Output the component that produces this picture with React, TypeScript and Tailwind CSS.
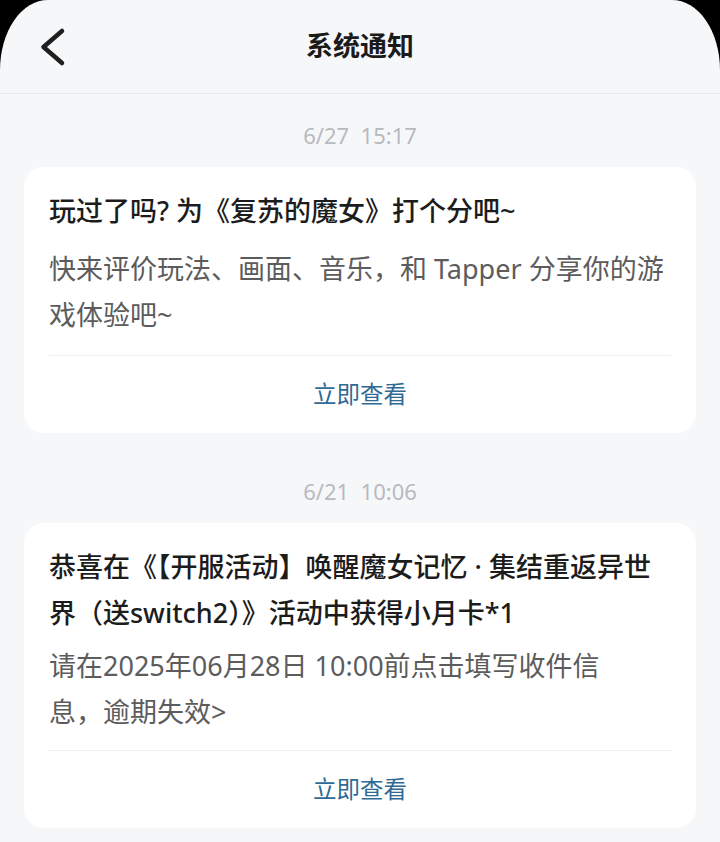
import React from 'react';

interface Notice {
  time: string;
  title: string;
  body: React.ReactNode;
  action: string;
  bodyGap: string;
  lineGap: string;
}

const notices: Notice[] = [
  {
    time: '6/27  15:17',
    title: '玩过了吗? 为《复苏的魔女》打个分吧~',
    body: '快来评价玩法、画面、音乐，和 Tapper 分享你的游戏体验吧~',
    action: '立即查看',
    bodyGap: 'mt-[12px]',
    lineGap: 'mt-[17px]',
  },
  {
    time: '6/21  10:06',
    title: '恭喜在《【开服活动】唤醒魔女记忆 · 集结重返异世界（送switch2）》活动中获得小月卡*1',
    body: (
      <>
        请在2025年06月28日 10:00前点击填写收件信
        <br />
        息，逾期失效&gt;
      </>
    ),
    action: '立即查看',
    bodyGap: 'mt-[7px]',
    lineGap: 'mt-[15px]',
  },
];

function BackIcon() {
  return (
    <svg width="32" height="40" viewBox="0 0 32 40" fill="none">
      <path d="M26 4 L7.5 20 L26 36" stroke="#1f1f1f" strokeWidth="4.5" strokeLinecap="round" strokeLinejoin="round" />
    </svg>
  );
}

function NoticeCard({ notice }: { notice: Notice }) {
  return (
    <div className="flex flex-col">
      {/* timestamp */}
      <div className="h-[28px] leading-[28px] text-center text-[22px] text-[#b7bac0] whitespace-pre">
        {notice.time}
      </div>
      <div className="mt-[18px] bg-white rounded-[20px] px-[25px] pt-[21px]">
        <h3 className="text-[27px] leading-[46px] font-medium text-[#1c1c1c]">{notice.title}</h3>
        <p className={`${notice.bodyGap} text-[27px] leading-[46px] text-[#5c5c5c]`}>{notice.body}</p>
        <div className={`${notice.lineGap} h-px bg-[#efefef]`} />
        <div className="h-[77px] flex items-center justify-center text-[23.5px] text-[#2f6a95]">
          {notice.action}
        </div>
      </div>
    </div>
  );
}

export default function App() {
  return (
    <div className="w-full min-h-[842px] bg-black font-['Noto_Sans','Noto_Sans_CJK_SC',sans-serif]">
      <div className="min-h-[842px] bg-[#f6f7f9] rounded-tl-[48px_70px] rounded-tr-[48px_70px] overflow-hidden">
        {/* header */}
        <div className="h-[94px] flex items-center border-b border-[#e9eaed]">
          <div className="w-[96px] pl-[36px] flex items-center">
            <BackIcon />
          </div>
          <h1 className="flex-1 text-center text-[27px] font-bold text-[#1a1a1a]">系统通知</h1>
          <div className="w-[96px]" />
        </div>

        <div className="px-[24px] pt-[27px] pb-[20px] flex flex-col gap-[44px]">
          {notices.map((n, i) => (
            <NoticeCard key={i} notice={n} />
          ))}
        </div>
      </div>
    </div>
  );
}
